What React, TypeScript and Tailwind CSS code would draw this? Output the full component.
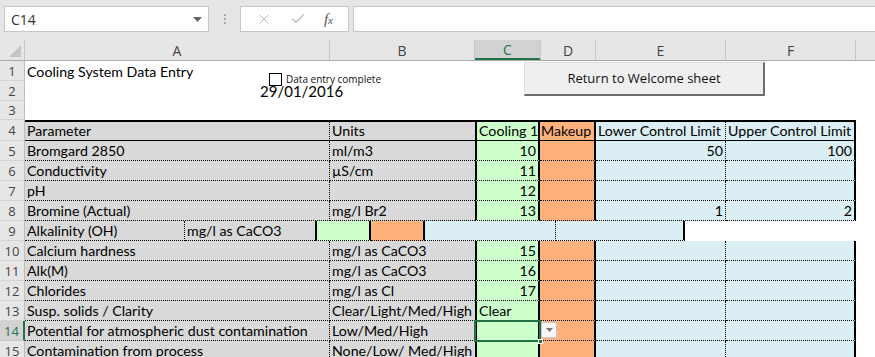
import { X, Check } from 'lucide-react';

type Row = {
  n: number;
  a: string;
  b: string;
  c?: string;
  cLeft?: boolean;
  e?: string;
  f?: string;
};

const rows: Row[] = [
  { n: 5, a: 'Bromgard 2850', b: 'ml/m3', c: '10', e: '50', f: '100' },
  { n: 6, a: 'Conductivity', b: 'µS/cm', c: '11' },
  { n: 7, a: 'pH', b: '', c: '12' },
  { n: 8, a: 'Bromine (Actual)', b: 'mg/l Br2', c: '13', e: '1', f: '2' },
];

const rows2: Row[] = [
  { n: 10, a: 'Calcium hardness', b: 'mg/l as CaCO3', c: '15' },
  { n: 11, a: 'Alk(M)', b: 'mg/l as CaCO3', c: '16' },
  { n: 12, a: 'Chlorides', b: 'mg/l as Cl', c: '17' },
  { n: 13, a: 'Susp. solids / Clarity', b: 'Clear/Light/Med/High', c: 'Clear', cLeft: true },
  { n: 14, a: 'Potential for atmospheric dust contamination', b: 'Low/Med/High' },
  { n: 15, a: 'Contamination from process', b: 'None/Low/ Med/High' },
];

const cell =
  'h-full flex items-end pb-[1px] px-[2px] leading-[17px] whitespace-nowrap overflow-hidden border-b border-black [border-bottom-style:dotted]';

const RowHead = ({ n, active }: { n: number; active?: boolean }) => (
  <div
    className={
      active
        ? 'w-[25px] h-full shrink-0 flex items-center justify-center bg-[#d2d2d2] text-[#217346] border-b border-[#c8c8c8] border-r-2 border-r-[#217346] text-[13px] leading-[16px] [font-family:Open_Sans,sans-serif]'
        : 'w-[25px] h-full shrink-0 flex items-center justify-center bg-[#e6e6e6] text-[#444] border-b border-[#d4d4d4] border-r border-r-[#bdbdbd] text-[13px] leading-[16px] [font-family:Open_Sans,sans-serif]'
    }
  >
    {n}
  </div>
);

const DataRow = ({ r }: { r: Row }) => (
  <div className="flex h-[20px]">
    <RowHead n={r.n} active={r.n === 14} />
    <div className={`${cell} w-[305px] bg-[#d9d9d9] border-r [border-right-style:dotted]`}>{r.a}</div>
    <div className={`${cell} w-[145px] bg-[#d9d9d9]`}>{r.b}</div>
    <div
      className={`${cell} w-[65px] bg-[#ccffcc] border-x-2 border-x-black ${r.cLeft ? 'justify-start' : 'justify-end'}`}
    >
      {r.c}
    </div>
    <div className={`${cell} w-[56px] bg-[#fdb27c] border-r-2 border-r-black`} />
    <div className={`${cell} w-[130px] bg-[#daeef3] justify-end border-r [border-right-style:dotted]`}>{r.e}</div>
    <div className={`${cell} w-[130px] bg-[#daeef3] justify-end border-r-2 border-r-black`}>{r.f}</div>
    <div className="flex-1 h-full bg-white" />
  </div>
);

const head = 'h-full flex items-end pb-[1px] px-[2px] leading-[17px] whitespace-nowrap overflow-hidden border-b border-black';

export default function App() {
  return (
    <div className="w-[875px] h-[357px] overflow-hidden bg-white relative [font-family:Open_Sans,Noto_Sans,sans-serif]">
      {/* formula bar */}
      <div className="h-[40px] bg-[#e6e6e6] flex items-start pt-[6px] pl-[4px]">
        <div className="w-[205px] h-[26px] bg-white border border-[#c6c6c6] flex items-center justify-between pl-[6px] pr-[6px] text-[14px] text-[#333]">
          <span>C14</span>
          <svg width="9" height="5" viewBox="0 0 9 5">
            <path d="M0 0h9L4.5 5z" fill="#666" />
          </svg>
        </div>
        <div className="w-[31px] h-[26px] flex flex-col items-center justify-center gap-[2px]">
          <span className="w-[2px] h-[2px] bg-[#aaa]" />
          <span className="w-[2px] h-[2px] bg-[#aaa]" />
          <span className="w-[2px] h-[2px] bg-[#aaa]" />
        </div>
        <div className="w-[109px] h-[26px] bg-white border border-[#c6c6c6] flex items-center justify-around px-[6px]">
          <X size={16} strokeWidth={1.5} color="#bdbdbd" />
          <Check size={16} strokeWidth={2} color="#bdbdbd" />
          <span className="text-[15px] italic text-[#555] [font-family:Liberation_Serif,serif]">
            f<span className="text-[11px]">x</span>
          </span>
        </div>
        <div className="ml-[4px] flex-1 h-[26px] bg-white border-y border-l border-[#c6c6c6]" />
      </div>

      {/* column headers */}
      <div className="flex h-[21px] bg-[#e6e6e6] border-b border-[#ababab] text-[14px] text-[#444]">
        <div className="w-[25px] h-full relative border-r border-[#c6c6c6]">
          <svg className="absolute right-[3px] bottom-[3px]" width="12" height="12" viewBox="0 0 12 12">
            <path d="M12 0v12H0z" fill="#c4c4c4" />
          </svg>
        </div>
        <div className="w-[305px] flex items-center justify-center border-r border-[#c6c6c6]">A</div>
        <div className="w-[145px] flex items-center justify-center border-r border-[#c6c6c6]">B</div>
        <div className="w-[65px] flex items-center justify-center bg-[#d2d2d2] text-[#217346] border-b-2 border-[#217346]">
          C
        </div>
        <div className="w-[56px] flex items-center justify-center border-x border-[#c6c6c6]">D</div>
        <div className="w-[130px] flex items-center justify-center border-r border-[#c6c6c6]">E</div>
        <div className="w-[130px] flex items-center justify-center border-r border-[#c6c6c6]">F</div>
        <div className="flex-1" />
      </div>

      {/* sheet */}
      <div className="relative text-[14.2px] text-black [font-family:Lato,Open_Sans,sans-serif]">
        <div className="flex h-[20px]">
          <RowHead n={1} />
          <div className="h-full flex items-end pb-[1px] px-[2px] leading-[17px]">Cooling System Data Entry</div>
        </div>
        <div className="flex h-[20px]">
          <RowHead n={2} />
        </div>
        <div className="flex h-[19px]">
          <RowHead n={3} />
        </div>

        {/* header row */}
        <div className="flex h-[21px]">
          <RowHead n={4} />
          <div className="h-full flex border-t-2 border-black">
            <div className={`${head} w-[305px] bg-[#d9d9d9] border-r [border-right-style:dotted]`}>Parameter</div>
            <div className={`${head} w-[145px] bg-[#d9d9d9]`}>Units</div>
            <div className={`${head} w-[65px] bg-[#ccffcc] border-x-2`}>Cooling 1</div>
            <div className={`${head} w-[56px] bg-[#fdb27c] border-r-2 !px-[1px]`}>Makeup</div>
            <div className={`${head} w-[130px] bg-[#daeef3] border-r [border-right-style:dotted]`}>Lower Control Limit</div>
            <div className={`${head} w-[130px] bg-[#daeef3] border-r-2`}>Upper Control Limit</div>
          </div>
        </div>

        {rows.map((r) => (
          <DataRow key={r.n} r={r} />
        ))}

        {/* row 9 */}
        <div className="flex h-[20px]">
          <RowHead n={9} />
          <div className={`${cell} w-[160px] bg-[#d9d9d9] border-r [border-right-style:dotted]`}>Alkalinity (OH)</div>
          <div className={`${cell} w-[130px] bg-[#d9d9d9]`}>mg/l as CaCO3</div>
          <div className={`${cell} w-[56px] bg-[#ccffcc] border-x-2 border-x-black`} />
          <div className={`${cell} w-[54px] bg-[#fdb27c] border-r-2 border-r-black`} />
          <div className={`${cell} w-[131px] bg-[#daeef3] border-r [border-right-style:dotted]`} />
          <div className={`${cell} w-[129px] bg-[#daeef3] border-r-2 border-r-black`} />
          <div className="flex-1 h-full bg-white" />
        </div>

        {rows2.map((r) => (
          <DataRow key={r.n} r={r} />
        ))}

        {/* overlays */}
        <div className="absolute left-[269px] top-[12px] w-[13px] h-[13px] border border-black bg-white" />
        <div className="absolute left-[286px] top-[12px] text-[10px] leading-[13px] [font-family:Open_Sans,sans-serif] text-[#111]">
          Data entry complete
        </div>
        <div className="absolute left-[260px] top-[21px] text-[15px] leading-[18px]">29/01/2016</div>

        <button className="absolute left-[524px] top-[1px] w-[241px] h-[34px] bg-[#efefef] border border-[#e0e0e0] border-b-[#6d6d6d] border-r-[#6d6d6d] border-b-2 border-r-2 text-[13px] text-[#111] [font-family:Open_Sans,sans-serif]">
          Return to Welcome sheet
        </button>

        {/* selected cell C14 */}
        <div className="absolute left-[474px] top-[259px] w-[67px] h-[22px] border-2 border-[#217346]" />
        <div className="absolute left-[538px] top-[278px] w-[5px] h-[5px] bg-[#217346] border border-white" />
        <div className="absolute left-[541px] top-[261px] w-[16px] h-[16px] bg-[#f6f6f6] border border-[#c6c6c6] flex items-center justify-center">
          <svg width="7" height="4" viewBox="0 0 7 4">
            <path d="M0 0h7L3.5 4z" fill="#777" />
          </svg>
        </div>
      </div>
    </div>
  );
}
